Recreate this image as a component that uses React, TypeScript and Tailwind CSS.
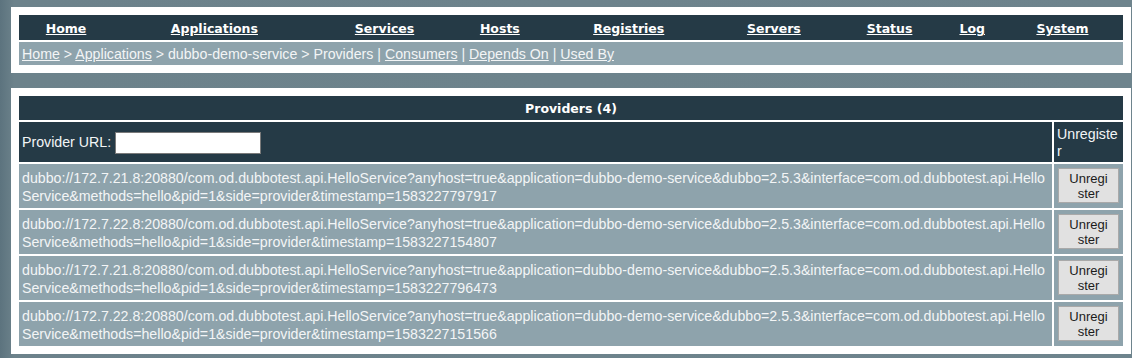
const NAV = ['Home', 'Applications', 'Services', 'Hosts', 'Registries', 'Servers', 'Status', 'Log', 'System'];

const PROVIDERS = [
  { host: '172.7.21.8', ts: '1583227797917' },
  { host: '172.7.22.8', ts: '1583227154807' },
  { host: '172.7.21.8', ts: '1583227796473' },
  { host: '172.7.22.8', ts: '1583227151566' },
];

const url = (host: string, ts: string) =>
  `dubbo://${host}:20880/com.od.dubbotest.api.HelloService?anyhost=true&application=dubbo-demo-service&dubbo=2.5.3&interface=com.od.dubbotest.api.HelloService&methods=hello&pid=1&side=provider&timestamp=${ts}`;

export default function App() {
  return (
    <div className="h-[358px] overflow-hidden bg-[linear-gradient(90deg,#5c737e_0px,#6c828b_14px,#6e848d_100%)] pt-[7px] pl-[11px] pr-[1px] font-['Liberation_Sans',Arial,sans-serif] text-[14.2px] text-[#f3f5f6]">
      {/* ── Menu ───────────────────────────────────────────── */}
      <div className="bg-white px-[8px] py-[6px]">
        <table className="w-full border-separate border-spacing-x-0 border-spacing-y-[2px]">
          <tbody>
            <tr className="bg-[#253a46]">
              {NAV.map((item) => (
                <td key={item} className="pt-[5px] pb-[3px] text-center font-['DejaVu_Sans',Verdana,sans-serif] text-[12.5px] leading-[17px] font-bold text-white">
                  <a href="#" className="underline">{item}</a>
                </td>
              ))}
            </tr>
            <tr className="bg-[#8ea3ac]">
              <td colSpan={9} className="px-[3px] pt-[4px] pb-[2px] leading-[17px]">
                <a href="#" className="underline">Home</a> &gt;{' '}
                <a href="#" className="underline">Applications</a> &gt; dubbo-demo-service &gt; Providers |{' '}
                <a href="#" className="underline">Consumers</a> |{' '}
                <a href="#" className="underline">Depends On</a> |{' '}
                <a href="#" className="underline">Used By</a>
              </td>
            </tr>
          </tbody>
        </table>
      </div>

      {/* ── Providers ──────────────────────────────────────── */}
      <div className="mt-[15px] bg-white p-[6px]">
        <table className="w-full border-separate border-spacing-[2px]">
          <tbody>
            <tr className="bg-[#253a46]">
              <td colSpan={2} className="pt-[4px] pb-[3px] text-center font-['DejaVu_Sans',Verdana,sans-serif] text-[12.5px] leading-[17px] font-bold text-white">
                Providers (4)
              </td>
            </tr>
            <tr className="bg-[#253a46]">
              <td className="px-[3px] pt-[2px] align-middle">
                Provider URL:{' '}
                <input type="text" className="h-[22px] w-[146px] border border-[#7a7a7a] bg-white align-middle text-black" />
              </td>
              <td className="w-[69px] px-[3px] pt-[4px] pb-[2px] leading-[17px] break-all">Unregister</td>
            </tr>
            {PROVIDERS.map((p) => (
              <tr key={p.ts} className="bg-[#8ea3ac]">
                <td className="px-[3px] pt-[5px] pb-[3px] leading-[18px] break-all">{url(p.host, p.ts)}</td>
                <td className="px-[3px] text-center align-middle">
                  <button className="h-[35px] w-[61px] border border-[#a9a9a9] bg-[#e1e1e1] text-[13px] leading-[15px] text-[#1b1b1b]">
                    Unregi
                    <br />
                    ster
                  </button>
                </td>
              </tr>
            ))}
          </tbody>
        </table>
      </div>
    </div>
  );
}
